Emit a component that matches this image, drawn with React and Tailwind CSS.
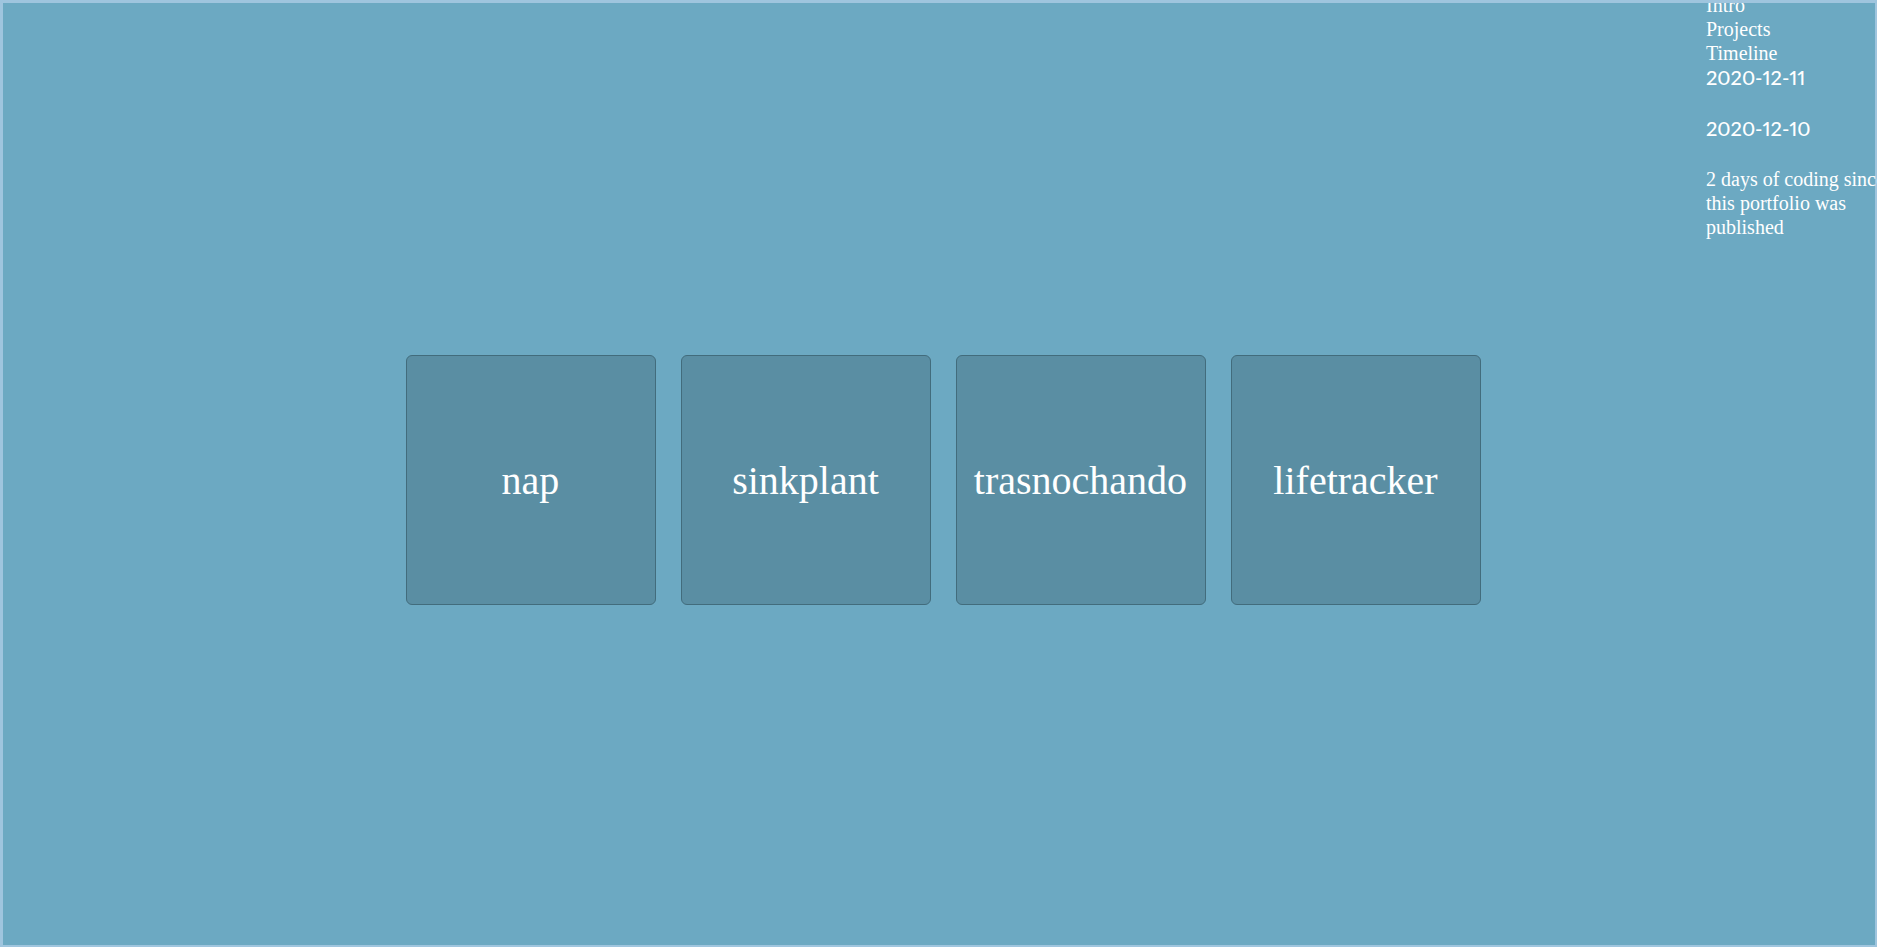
const projects = ["nap", "sinkplant", "trasnochando", "lifetracker"];
const sections = ["Intro", "Projects", "Timeline"];
const dates = ["2020-12-11", "2020-12-10"];

function ProjectCard({ name }) {
  return (
    <a
      href={`#${name}`}
      className="flex size-[250px] items-center justify-center rounded-md border border-[#426c7c] bg-[#5a8ea3] pt-0.5 text-[40px] leading-12"
    >
      {name}
    </a>
  );
}

function Sidebar() {
  return (
    <aside className="absolute -top-2.5 -right-8 w-[201px] text-xl leading-6">
      <nav className="flex flex-col">
        {sections.map((section) => (
          <a key={section} href={`#${section.toLowerCase()}`}>
            {section}
          </a>
        ))}
      </nav>
      {dates.map((date) => (
        <p key={date} className="mb-[27px] font-['Lato',sans-serif] font-medium proportional-nums">
          {date}
        </p>
      ))}
      <p>2 days of coding since this portfolio was published</p>
    </aside>
  );
}

export default function App() {
  return (
    <div className="overflow-hidden font-['Liberation_Serif',serif] text-white">
      <div className="relative flex min-h-screen items-center justify-center overflow-y-clip border-t-3 border-r-2 border-b-2 border-l-3 border-[#9fc5de] bg-[#6ca9c2] pt-3 pl-2">
        <main className="flex flex-wrap justify-center gap-[25px]">
          {projects.map((name) => (
            <ProjectCard key={name} name={name} />
          ))}
        </main>
        <Sidebar />
      </div>
    </div>
  );
}
